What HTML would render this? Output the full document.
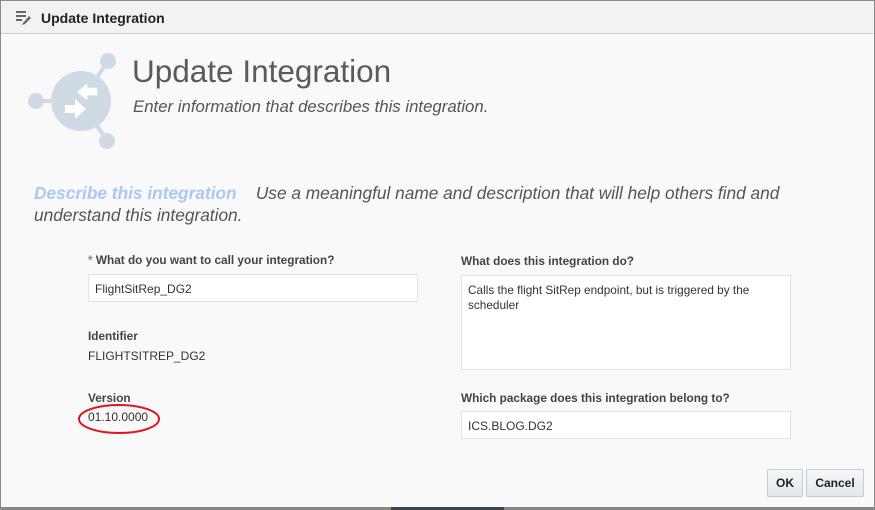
<!DOCTYPE html>
<html><head><style>
body{margin:0;width:875px;height:510px;overflow:hidden;background:#f9f9f9;font-family:"Liberation Sans",Arial,sans-serif;position:relative}
.frame{position:absolute;left:0;top:0;width:873px;height:506px;border:1px solid #8a8a8a;border-bottom:3px solid #888;background:#f9f9f9}
.hdr{position:absolute;left:0;top:0;width:873px;height:32px;background:#f2f2f2;border-bottom:1px solid #c8d0d8}
.hdr span{position:absolute;left:40px;top:9px;font-size:14px;font-weight:bold;color:#222}
.a{position:absolute;white-space:nowrap}
.lbl{font-size:11.8px;font-weight:bold;color:#444}
.inp{position:absolute;background:#fff;border:1px solid #dfe4e8;box-sizing:border-box;font-size:12px;color:#333;padding:7px 6px}
.btn{position:absolute;top:468px;height:28px;border:1px solid #c4cbd2;border-radius:2px;background:linear-gradient(#f5f7f9,#e3e8ec);font-size:12px;font-weight:bold;color:#222;text-align:center;line-height:27px;box-sizing:border-box}
</style></head><body>
<div class="frame">
<div class="hdr">
<svg style="position:absolute;left:14px;top:9px" width="16" height="15" viewBox="0 0 16 15"><rect x="1" y="1" width="10" height="2" fill="#666"/><rect x="1" y="5" width="10" height="2" fill="#666"/><rect x="1" y="9" width="6" height="2" fill="#666"/><path d="M8 13 L14 6 L16 8 L10 14 L7 15Z" fill="#666"/></svg>
<span>Update Integration</span></div>
<svg style="position:absolute;left:25px;top:50px" width="100" height="100" viewBox="0 0 100 100">
<g stroke="#cfdae5" stroke-width="4">
<line x1="55" y1="50" x2="82" y2="10"/><line x1="55" y1="50" x2="81" y2="90"/><line x1="55" y1="50" x2="10" y2="50"/></g>
<g fill="#cfdae5"><circle cx="82" cy="10" r="8"/><circle cx="81" cy="90" r="8"/><circle cx="10" cy="50" r="8"/><circle cx="55" cy="50" r="30"/></g>
<path d="M39 54 L49 54 L49 48 L60 58 L49 68 L49 62 L39 62Z" fill="#fff"/>
<path d="M72 36 L62 36 L62 31 L50 41 L62 51 L62 45 L72 45Z" fill="#fff" stroke="#cfdae5" stroke-width="1.5"/>
</svg>
<div class="a" style="left:131px;top:52px;font-size:31.5px;color:#5a5a5a">Update Integration</div>
<div class="a" style="left:132px;top:96px;font-size:16.8px;font-style:italic;color:#555">Enter information that describes this integration.</div>
<div class="a" style="left:33px;top:181px;font-size:17.3px;font-style:italic;color:#555;line-height:22px;white-space:normal;width:790px"><b style="color:#a9c8f2">Describe this integration</b>&nbsp;&nbsp;&nbsp; Use a meaningful name and description that will help others find and understand this integration.</div>
<div class="a lbl" style="left:87px;top:252px"><span style="color:#6b8ab0">*</span> What do you want to call your integration?</div>
<div class="inp" style="left:87px;top:273px;width:330px;height:28px">FlightSitRep_DG2</div>
<div class="a lbl" style="left:87px;top:328px">Identifier</div>
<div class="a" style="left:87px;top:348px;font-size:12px;color:#333">FLIGHTSITREP_DG2</div>
<div class="a lbl" style="left:87px;top:390px">Version</div>
<div class="a" style="left:87px;top:409px;font-size:12px;color:#333">01.10.0000</div>
<svg style="position:absolute;left:76px;top:402px" width="84" height="32"><ellipse cx="42" cy="16" rx="40" ry="14" fill="none" stroke="#e0141e" stroke-width="2"/></svg>
<div class="a lbl" style="left:460px;top:253px">What does this integration do?</div>
<div class="inp" style="left:460px;top:274px;width:330px;height:95px;line-height:15px;white-space:normal;font-size:11.8px">Calls the flight SitRep endpoint, but is triggered by the scheduler</div>
<div class="a lbl" style="left:460px;top:390px">Which package does this integration belong to?</div>
<div class="inp" style="left:460px;top:410px;width:330px;height:28px">ICS.BLOG.DG2</div>
<div class="btn" style="left:766px;width:36px">OK</div>
<div class="btn" style="left:805px;width:58px">Cancel</div>
</div>
<div style="position:absolute;left:391px;top:507px;width:113px;height:3px;background:#3a4650"></div>
</body></html>
